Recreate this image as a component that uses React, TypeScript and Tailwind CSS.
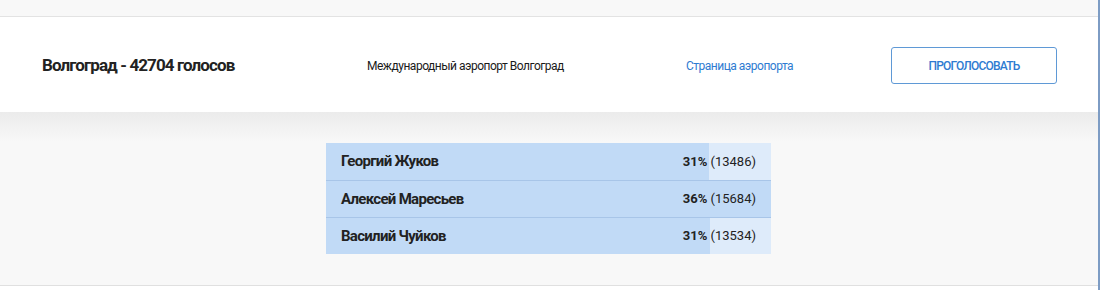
const rows = [
  { name: "Георгий Жуков", pct: 31, votes: 13486 },
  { name: "Алексей Маресьев", pct: 36, votes: 15684 },
  { name: "Василий Чуйков", pct: 31, votes: 13534 },
];

const font = { fontFamily: 'Roboto, "Liberation Sans", sans-serif' };

const App = () => {
  const max = Math.max(...rows.map((r) => r.votes));

  return (
    <div className="w-[1102px] h-[290px] bg-white overflow-hidden" style={font}>
      <div className="w-[1100px] border-r-2 border-[#7d9cc4] h-full flex flex-col bg-[#f8f8f8]">
        <div className="h-[17px] border-b border-[#e3e3e3]" />
        <div className="h-[95px] bg-white flex items-center pl-[42px] pr-[41px] pt-[2px]">
          <h2 className="w-[325px] text-[17px] font-bold tracking-[-0.9px] text-[#222]">
            Волгоград - 42704 голосов
          </h2>
          <div className="w-[319px] text-[12px] tracking-[-0.5px] text-[#1a1a1a]">
            Международный аэропорт Волгоград
          </div>
          <a href="#" className="text-[12px] tracking-[-0.5px] text-[#2e7bd1]">
            Страница аэропорта
          </a>
          <button className="ml-auto w-[166px] h-[37px] rounded-[3px] border border-[#5f99d6] text-[12px] font-medium tracking-[-0.8px] text-[#2e7bd1] uppercase">
            Проголосовать
          </button>
        </div>
        <div className="flex-1 bg-[linear-gradient(to_bottom,#ebebeb,#f8f8f8_30px)] pt-[31px]">
          <div className="w-[445px] ml-[326px] bg-[#deebfa] flex flex-col">
            {rows.map((r, i) => (
              <div
                key={r.name}
                className={`relative h-[37px] flex items-center px-[15px] ${
                  i > 0 ? "border-t border-[#a8c5e8]" : ""
                }`}
              >
                <div
                  className="absolute left-0 top-0 bottom-0 bg-[#c1daf6]"
                  style={{ width: `${(r.votes / max) * 100}%` }}
                />
                <span className="relative text-[15px] font-bold tracking-[-0.7px] text-[#222]">
                  {r.name}
                </span>
                <span className="relative ml-auto text-[13px] text-[#222]">
                  <b>{r.pct}%</b> ({r.votes})
                </span>
              </div>
            ))}
          </div>
        </div>
        <div className="h-[5px] bg-white border-t border-[#e0e0e0]" />
      </div>
    </div>
  );
};

export default App;
